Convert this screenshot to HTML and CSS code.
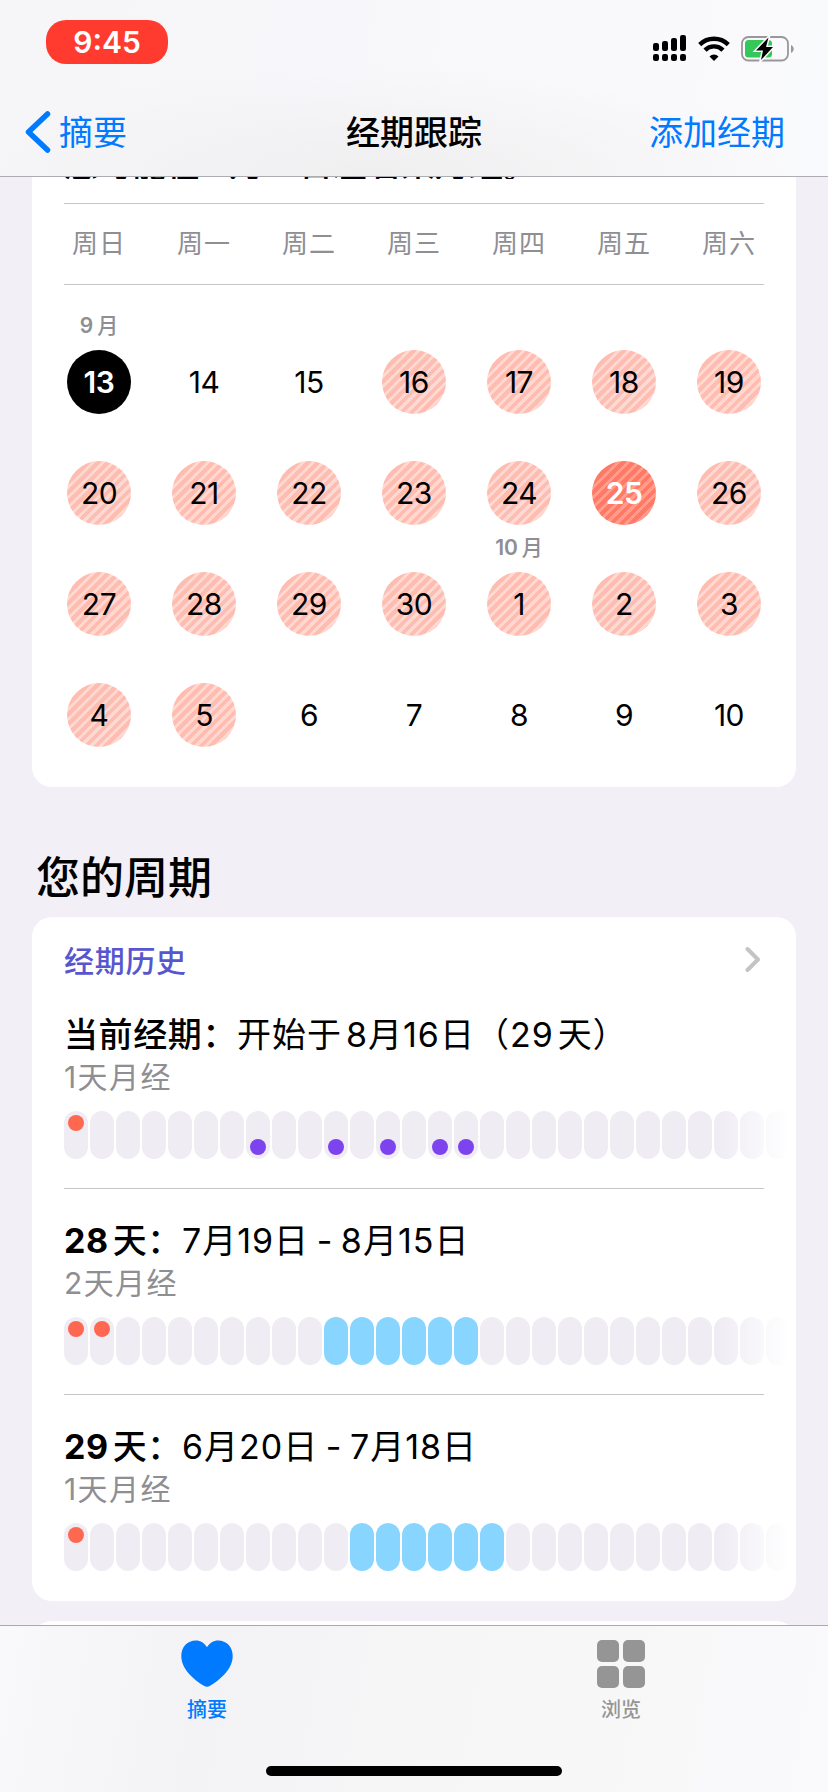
FILE: index.html
```
<!DOCTYPE html>
<html lang="zh-CN">
<head>
    <meta charset="utf-8">
    <title>经期跟踪</title>
    <link rel="stylesheet" href="styles.css">
</head>
<body>
    <header class="top">
        <div class="status">
            <div class="time">9:45</div>
            <div class="status-icons">
                <svg width="34" height="28" viewBox="0 0 34 28">
                    <rect x="0" y="9" width="6" height="8" rx="2.2"/>
                    <rect x="9" y="7" width="6" height="10" rx="2.2"/>
                    <rect x="18" y="4" width="6" height="13" rx="2.2"/>
                    <rect x="27" y="1" width="6" height="16" rx="2.2"/>
                    <rect x="0" y="20" width="6" height="7" rx="2.2"/>
                    <rect x="9" y="20" width="6" height="7" rx="2.2"/>
                    <rect x="18" y="20" width="6" height="7" rx="2.2"/>
                    <rect x="27" y="20" width="6" height="7" rx="2.2"/>
                </svg>
                <svg class="wifi" width="32" height="28" viewBox="0 0 32 28">
                    <g fill="none" stroke="#000" stroke-width="4.4">
                        <path d="M1.7 10.6a20.4 20.4 0 0 1 28.6 0"/>
                        <path d="M7 16.1a12.8 12.8 0 0 1 18 0"/>
                    </g>
                    <path d="M16 27l-4.5-4.6a6.4 6.4 0 0 1 9 0z"/>
                </svg>
                <svg class="battery" width="54" height="28" viewBox="0 0 54 28">
                    <rect x="1" y="3" width="46" height="23.5" rx="6.500" fill="none" stroke="#98989b" stroke-width="1.8"/>
                    <path d="M50 11c3.6 1.4 3.6 6.6 0 8z" fill="#98989b"/>
                    <rect x="4" y="6" width="27" height="17.5" rx="3.5" fill="#34c759"/>
                    <path d="M27.500 3.500L15 16.500h7L20 26 32 13h-7z" fill="#000" stroke="#fafafc" stroke-width="3" paint-order="stroke"/>
                </svg>
            </div>
        </div>
        <nav class="nav">
            <a class="back">
                <svg width="26" height="44" viewBox="0 0 26 44"><path d="M22.500 4L3.500 22l19 18" fill="none" stroke="#007aff" stroke-width="5.500" stroke-linecap="round" stroke-linejoin="round"/></svg>
                <span>摘要</span>
            </a>
            <h1>经期跟踪</h1>
            <a class="add">添加经期</a>
        </nav>
    </header>

    <main>
        <section class="card calendar">
            <div class="notice"><p>您可能在<i class="gap"></i>9月16日左右来月经。</p></div>
            <div class="weekdays">
                <span>周日</span><span>周一</span><span>周二</span><span>周三</span><span>周四</span><span>周五</span><span>周六</span>
            </div>
            <div class="days">
                <div class="day"><small>9<b>月</b></small><span class="today">13</span></div>
                <div class="day"><span>14</span></div>
                <div class="day"><span>15</span></div>
                <div class="day"><span class="likely">16</span></div>
                <div class="day"><span class="likely">17</span></div>
                <div class="day"><span class="likely">18</span></div>
                <div class="day"><span class="likely">19</span></div>

                <div class="day"><span class="likely">20</span></div>
                <div class="day"><span class="likely">21</span></div>
                <div class="day"><span class="likely">22</span></div>
                <div class="day"><span class="likely">23</span></div>
                <div class="day"><span class="likely">24</span></div>
                <div class="day"><span class="likely selected">25</span></div>
                <div class="day"><span class="likely">26</span></div>

                <div class="day"><span class="likely">27</span></div>
                <div class="day"><span class="likely">28</span></div>
                <div class="day"><span class="likely">29</span></div>
                <div class="day"><span class="likely">30</span></div>
                <div class="day"><small>10<b>月</b></small><span class="likely">1</span></div>
                <div class="day"><span class="likely">2</span></div>
                <div class="day"><span class="likely">3</span></div>

                <div class="day"><span class="likely">4</span></div>
                <div class="day"><span class="likely">5</span></div>
                <div class="day"><span>6</span></div>
                <div class="day"><span>7</span></div>
                <div class="day"><span>8</span></div>
                <div class="day"><span>9</span></div>
                <div class="day"><span>10</span></div>
            </div>
        </section>

        <h2>您的周期</h2>

        <section class="card history">
            <div class="history-head">
                <h3>经期历史</h3>
                <svg width="16" height="26" viewBox="0 0 16 26"><path d="M2.500 3L13 13.500 2.500 24" fill="none" stroke="#c4c4c6" stroke-width="4" stroke-linecap="round" stroke-linejoin="round"/></svg>
            </div>
            <article class="cycle">
                <p class="range"><b>当前经期：</b><span>开始于<i class="gap"></i>8月16日（29<i class="gap"></i>天）</span></p>
                <p class="flow">1天月经</p>
                <div class="bars">
                    <i class="period"></i><i></i><i></i><i></i><i></i><i></i><i></i>
                    <i class="symptom"></i><i></i><i></i><i class="symptom"></i><i></i><i class="symptom"></i><i></i>
                    <i class="symptom"></i><i class="symptom"></i><i></i><i></i><i></i><i></i><i></i>
                    <i></i><i></i><i></i><i></i><i></i><i></i><i></i>
                </div>
            </article>
            <article class="cycle">
                <p class="range"><b><strong>28</strong><i class="gap"></i>天：</b><span>7月19日 - 8月15日</span></p>
                <p class="flow">2天月经</p>
                <div class="bars">
                    <i class="period"></i><i class="period"></i><i></i><i></i><i></i><i></i><i></i>
                    <i></i><i></i><i></i><i class="fertile"></i><i class="fertile"></i><i class="fertile"></i><i class="fertile"></i>
                    <i class="fertile"></i><i class="fertile"></i><i></i><i></i><i></i><i></i><i></i>
                    <i></i><i></i><i></i><i></i><i></i><i></i><i></i>
                </div>
            </article>
            <article class="cycle">
                <p class="range"><b><strong>29</strong><i class="gap"></i>天：</b><span>6月20日 - 7月18日</span></p>
                <p class="flow">1天月经</p>
                <div class="bars">
                    <i class="period"></i><i></i><i></i><i></i><i></i><i></i><i></i>
                    <i></i><i></i><i></i><i></i><i class="fertile"></i><i class="fertile"></i><i class="fertile"></i>
                    <i class="fertile"></i><i class="fertile"></i><i class="fertile"></i><i></i><i></i><i></i><i></i>
                    <i></i><i></i><i></i><i></i><i></i><i></i><i></i>
                </div>
            </article>
        </section>

        <section class="card next"></section>
    </main>

    <footer class="tabbar">
        <div class="tabs">
            <a class="tab active">
                <svg width="52" height="48" viewBox="0 0 52 48"><path d="M26 7.200C23.500 3 19.500.4 14.800.4 6.500.4.3 6.800.3 16c0 13 12.200 23.500 23 30 1.900 1.100 3.500 1.100 5.400 0 10.800-6.500 23-17 23-30C51.700 6.800 45.500.4 37.200.4 32.500.4 28.500 3 26 7.200z"/></svg>
                <span>摘要</span>
            </a>
            <a class="tab">
                <svg width="48" height="48" viewBox="0 0 48 48"><rect width="22" height="22" rx="5"/><rect x="26" width="22" height="22" rx="5"/><rect y="26" width="22" height="22" rx="5"/><rect x="26" y="26" width="22" height="22" rx="5"/></svg>
                <span>浏览</span>
            </a>
        </div>
        <div class="home-bar"></div>
    </footer>
</body>
</html>
```
FILE: styles.css
```
* {
    box-sizing: border-box;
}
body {
    margin: 0;
    width: 828px;
    height: 1792px;
    overflow: hidden;
    display: flex;
    flex-direction: column;
    background: #f2eff7;
    color: #000;
    font-family: Inter, "Noto Sans CJK SC", sans-serif;
}
h1, h2, h3, p {
    margin: 0;
}
i {
    font-style: normal;
}
.top {
    flex: none;
    height: 177px;
    border-bottom: 1px solid #aeadb3;
    background:
        radial-gradient(ellipse 420px 110px at 45% 100%, #efeff0, transparent),
        linear-gradient(100deg, #f6f6f8, #f7f6fa 35%, #f9f9fb 60%, #f9fafd);
}
.status {
    display: flex;
    justify-content: space-between;
    height: 88px;
    padding: 20px 33px 0 46px;
}
.time {
    width: 122px;
    height: 44px;
    border-radius: 20px;
    background: #ff3b2f;
    color: #fff;
    font-size: 30px;
    font-weight: 600;
    line-height: 45px;
    text-align: center;
}
.status-icons {
    display: flex;
    padding-top: 14px;
}
.wifi {
    margin-left: 11px;
}
.battery {
    margin-left: 11px;
}
.nav {
    display: grid;
    grid-template-columns: 1fr auto 1fr;
    align-items: center;
    height: 88px;
    padding: 0 43px 0 25px;
    font-size: 34px;
    line-height: 44px;
}
.back {
    display: flex;
    align-items: center;
    gap: 8px;
    color: #007aff;
}
.back span, .nav h1, .add {
    padding-top: 2px;
}
.nav h1 {
    font-size: 34px;
    font-weight: 500;
    margin-left: 18px;
}
.add {
    color: #007aff;
    text-align: right;
}
main {
    flex: 1;
    min-height: 0;
    overflow: hidden;
    padding: 0 32px;
}
.card {
    background: #fff;
    border-radius: 20px;
}
.calendar {
    height: 610px;
    padding: 0 32px;
    border-radius: 0 0 20px 20px;
}
/* scrolled under the navigation bar, only the lowest pixels stay visible */
.notice {
    display: flex;
    align-items: flex-end;
    height: 2px;
    overflow: hidden;
    font-size: 34px;
    font-weight: 500;
    line-height: 29px;
    white-space: nowrap;
}
.weekdays, .days {
    display: grid;
    grid-template-columns: repeat(7, 105px);
    justify-content: center;
}
.weekdays {
    height: 82px;
    margin-top: 24px;
    border-top: 1px solid #c6c6c8;
    border-bottom: 1px solid #c6c6c8;
    line-height: 80px;
    text-align: center;
    color: #8e8e93;
    font-size: 26px;
    letter-spacing: 1px;
}
.days {
    grid-auto-rows: 111px;
    padding-top: 18px;
}
.day {
    display: flex;
    flex-direction: column;
    align-items: center;
    justify-content: flex-end;
}
.day small {
    color: #8e8e93;
    font-size: 21px;
    font-weight: 600;
    line-height: 28px;
    margin-bottom: 10px;
}
.day small b {
    font-weight: 500;
    margin-left: 4px;
}
.day span {
    width: 64px;
    height: 64px;
    border-radius: 50%;
    font-size: 30px;
    line-height: 65px;
    text-align: center;
    letter-spacing: -0.5px;
}
.day .today {
    background: #000;
    color: #fff;
    font-weight: 600;
}
.day .likely {
    background: repeating-linear-gradient(135deg, #ffbdb1 0 4px, #ffd9d1 4px 7px);
}
.day .selected {
    background: repeating-linear-gradient(135deg, #ff7a66 0 4px, #ff9c8c 4px 7px);
    color: #fff;
    font-weight: 600;
}
h2 {
    height: 130px;
    padding: 59px 0 0 4px;
    font-size: 44px;
    font-weight: 500;
    line-height: 64px;
}
.history {
    height: 684px;
    padding: 0 32px;
}
.history-head {
    display: flex;
    justify-content: space-between;
    align-items: center;
    height: 66px;
    padding: 18px 3px 0 0;
}
.history-head h3 {
    color: #5856ce;
    font-size: 30px;
    font-weight: 500;
    letter-spacing: 0.7px;
}
.cycle {
    height: 206px;
    padding-top: 26px;
}
.cycle:not(:last-child) {
    border-bottom: 1px solid #c6c6c8;
}
.range {
    height: 49px;
    font-size: 34px;
    line-height: 52px;
    letter-spacing: 0.6px;
    white-space: nowrap;
}
.range span {
    letter-spacing: 1px;
    word-spacing: -3px;
}
.range b {
    font-weight: 500;
}
.range strong {
    font-weight: 700;
}
.gap {
    display: inline-block;
    width: 4px;
}
.notice .gap {
    width: 8px;
}
.flow {
    height: 53px;
    color: #8e8e93;
    font-size: 30px;
    line-height: 38px;
    letter-spacing: 1.4px;
}
.bars {
    display: flex;
    gap: 2px;
    width: 732px;
    overflow: hidden;
    -webkit-mask-image: linear-gradient(to right, #000 655px, transparent 725px);
    mask-image: linear-gradient(to right, #000 655px, transparent 725px);
}
.bars i {
    flex: none;
    display: flex;
    justify-content: center;
    width: 24px;
    height: 48px;
    padding: 4px 0;
    border-radius: 12px;
    background: #efecf4;
}
.bars .fertile {
    background: #88d6ff;
}
.bars .period::before, .bars .symptom::before {
    content: "";
    width: 16px;
    height: 16px;
    border-radius: 50%;
    background: #ff6850;
}
.bars .symptom::before {
    align-self: flex-end;
    background: #7d43ef;
}
.next {
    height: 100px;
    margin-top: 20px;
}
.tabbar {
    flex: none;
    height: 167px;
    border-top: 1px solid #a9a9ae;
    background: linear-gradient(100deg, #f9f9fb, #f3f2f5 25%, #f6f6f7 50%, #f8f8f9 80%, #fafafd);
}
.tabs {
    display: grid;
    grid-template-columns: 1fr 1fr;
    height: 140px;
}
.tab {
    display: flex;
    flex-direction: column;
    align-items: center;
    padding-top: 14px;
    color: #959595;
    fill: #959595;
    font-size: 20px;
    font-weight: 500;
    line-height: 28px;
}
.tab span {
    margin-top: 8px;
}
.tab.active {
    color: #007aff;
    fill: #007aff;
}
.home-bar {
    width: 296px;
    height: 10px;
    margin: 0 auto;
    border-radius: 5px;
    background: #000;
}
```
